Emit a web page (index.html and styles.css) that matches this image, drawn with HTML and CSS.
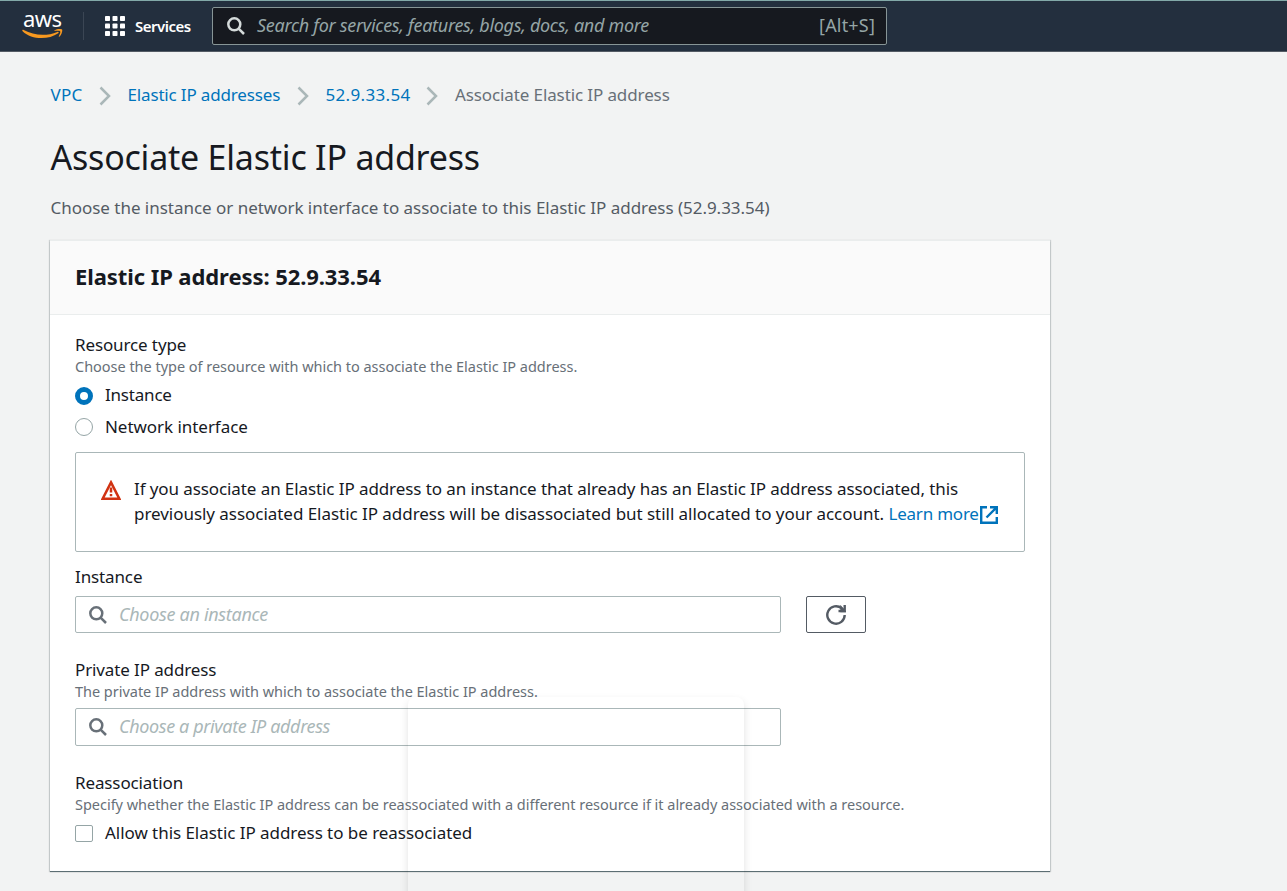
FILE: index.html
```html
<!DOCTYPE html>
<html lang="en">
<head>
<meta charset="utf-8">
<title>Associate Elastic IP address</title>
<link rel="stylesheet" href="styles.css">
</head>
<body>
<header class="topbar">
  <a class="logo">
    <span class="logo-word">aws</span>
    <svg class="logo-smile" width="41" height="10" viewBox="0 0 41 10"><path d="M.3 1.2C.6.7 1.100.7 1.700 1 12 6.700 25 7.200 35.300 2.900c1.200-.5 1.900.5.9 1.300C26.500 11 9.500 11 .6 2.200.2 1.800.1 1.500.3 1.200z"/><path d="M38.200 2.500c-.8-1-4.200-.6-5.600-.4-.6 0-.6-.4-.1-.7C35.300-.5 39.700 0 40.100.6c.5.600-.1 4.900-2.700 7.100-.4.300-.8.100-.6-.4.600-1.500 2-4 1.400-4.800z"/></svg>
  </a>
  <span class="divider"></span>
  <a class="services">
    <svg width="20" height="20" viewBox="0 0 20 20"><g><rect width="5" height="5" rx=".8"/><rect x="7.500" width="5" height="5" rx=".8"/><rect x="15" width="5" height="5" rx=".8"/><rect y="7.500" width="5" height="5" rx=".8"/><rect x="7.500" y="7.500" width="5" height="5" rx=".8"/><rect x="15" y="7.500" width="5" height="5" rx=".8"/><rect y="15" width="5" height="5" rx=".8"/><rect x="7.500" y="15" width="5" height="5" rx=".8"/><rect x="15" y="15" width="5" height="5" rx=".8"/></g></svg>
    <span>Services</span>
  </a>
  <div class="search">
    <svg class="glass" width="18" height="18" viewBox="0 0 18 18"><circle cx="7.300" cy="7.300" r="6"/><path d="M11.600 11.600 17 17"/></svg>
    <span class="search-hint">Search for services, features, blogs, docs, and more</span>
    <span class="search-key">[Alt+S]</span>
  </div>
</header>
<main class="page">
  <nav class="crumbs">
    <a class="crumb-vpc">VPC</a>
    <svg class="chevron" width="12" height="20" viewBox="0 0 12 20"><path d="M1.500 1.500 10 10l-8.500 8.500"/></svg>
    <a class="crumb-list">Elastic IP addresses</a>
    <svg class="chevron" width="12" height="20" viewBox="0 0 12 20"><path d="M1.500 1.500 10 10l-8.500 8.500"/></svg>
    <a class="crumb-ip">52.9.33.54</a>
    <svg class="chevron" width="12" height="20" viewBox="0 0 12 20"><path d="M1.500 1.500 10 10l-8.500 8.500"/></svg>
    <span class="crumb-current">Associate Elastic IP address</span>
  </nav>
  <h1>Associate Elastic IP address</h1>
  <p class="intro">Choose the instance or network interface to associate to this Elastic IP address (52.9.33.54)</p>

  <section class="card">
    <div class="card-head"><h2>Elastic IP address: 52.9.33.54</h2></div>
    <div class="card-body">
      <div class="field">
        <div class="label">Resource type</div>
        <div class="help">Choose the type of resource with which to associate the Elastic IP address.</div>
        <div class="choice choice-first"><span class="radio radio-on"></span><span class="choice-instance">Instance</span></div>
        <div class="choice choice-next"><span class="radio"></span><span class="choice-text">Network interface</span></div>
      </div>
      <div class="alert">
        <svg class="warn" width="20" height="20" viewBox="0 0 20 20"><path class="warn-edge" d="M10 2.400 18.300 18.700H1.700z"/><path class="warn-mark" d="M10 7.500v5M10 14v2.200"/></svg>
        <div class="alert-text">
          <div class="alert-one">If you associate an Elastic IP address to an instance that already has an Elastic IP address associated, this</div>
          <div class="alert-two"><span>previously associated Elastic IP address will be disassociated but still allocated to your account.</span><a class="learn">Learn more</a><svg class="external" width="18" height="18" viewBox="0 0 18 18"><path d="M7 1.200H1.200v15.600h15.600V11M10 1.200h6.800V8M16.500 1.500 6.500 11.500"/></svg></div>
        </div>
      </div>
      <div class="field field-instance">
        <div class="label">Instance</div>
        <div class="row">
          <div class="input"><svg class="glass" width="18" height="18" viewBox="0 0 18 18"><circle cx="7.300" cy="7.300" r="6"/><path d="M11.600 11.600 17 17"/></svg><span class="ph-instance">Choose an instance</span></div>
          <button class="refresh"><svg width="20" height="20" viewBox="0 0 20 20"><path d="M18.700 10a8.700 8.700 0 1 1-3-6.600l2 2"/><path d="M18.700 0v6H12.500"/><path d="M15.500 3v3h2.500z"/></svg></button>
        </div>
      </div>
      <div class="field field-private">
        <div class="label label-private">Private IP address</div>
        <div class="help">The private IP address with which to associate the Elastic IP address.</div>
        <div class="input input-private"><svg class="glass" width="18" height="18" viewBox="0 0 18 18"><circle cx="7.300" cy="7.300" r="6"/><path d="M11.600 11.600 17 17"/></svg><span class="ph-private">Choose a private IP address</span></div>
      </div>
      <div class="field field-reassoc">
        <div class="label">Reassociation</div>
        <div class="help">Specify whether the Elastic IP address can be reassociated with a different resource if it already associated with a resource.</div>
        <div class="choice choice-check"><span class="checkbox"></span><span class="choice-text">Allow this Elastic IP address to be reassociated</span></div>
      </div>
    </div>
  </section>
</main>
<div class="ghost"></div>
</body>
</html>
```
FILE: styles.css
```css
* { box-sizing: border-box; }

body {
  margin: 0;
  height: 891px;
  overflow: hidden;
  background: #f2f3f3;
  color: #16191f;
  font: 17px/25px "Noto Sans", sans-serif;
}

h1, h2, p { margin: 0; }
svg { display: block; flex: none; }
a { color: #0073bb; }

/* Top navigation */
.topbar {
  display: flex;
  align-items: center;
  height: 52px;
  background: #232f3e;
  border-top: 1px solid #82a9a8;
  border-bottom: 1px solid #545b64;
}
.logo { width: 41px; height: 28px; margin-left: 22px; margin-bottom: 2px; }
.logo-word {
  display: block;
  height: 18px;
  padding-left: 1px;
  color: #fff;
  font-size: 22px;
  font-weight: 400;
  line-height: 14px;
  letter-spacing: -.6px;
}
.logo-smile { fill: #f7981f; }
.divider { width: 1px; height: 28px; margin-left: 20px; background: #3b4654; }
.services {
  display: flex;
  align-items: center;
  gap: 10px;
  width: 107px;
  margin-left: 21px;
  color: #fff;
  font-size: 15px;
  font-weight: 600;
  letter-spacing: -.5px;
}
.services svg { fill: #fff; }
.search {
  display: flex;
  align-items: center;
  width: 675px;
  height: 38px;
  padding: 0 12px 0 14px;
  background: #16191f;
  border: 1px solid #879596;
  border-radius: 2px;
  color: #95a5a6;
}
.search .glass { stroke: #d5dbdb; }
.search-hint { margin: 0 0 2px 12px; font-size: 18px; font-style: italic; letter-spacing: -.295px; }
.search-key { margin: 0 -1px 2px auto; font-size: 18px; letter-spacing: .18px; }

.glass { fill: none; stroke: #687078; stroke-width: 2.500; }

/* Page heading */
.page { padding: 30px 0 0 50px; }
.crumbs { display: flex; align-items: center; height: 25px; color: #687078; }
.chevron { fill: none; stroke: #aab7b8; stroke-width: 2.500; position: relative; top: 1px; }
.crumb-vpc { width: 49px; padding-left: .5px; letter-spacing: .25px; }
.crumb-list { width: 170px; margin-left: 16px; padding-left: .5px; letter-spacing: -.16px; }
.crumb-ip { width: 101px; margin-left: 16px; padding-left: .5px; letter-spacing: .33px; }
.crumb-current { margin-left: 17px; letter-spacing: -.11px; }
h1 { margin-top: 30px; padding-left: .5px; font-size: 34px; font-weight: 400; line-height: 40px; letter-spacing: -.22px; }
.intro { margin-top: 18px; padding-left: .5px; color: #545b64; letter-spacing: -.025px; }

/* Form card */
.card {
  width: 1000px;
  height: 630px;
  margin-top: 21px;
  background: #fff;
  box-shadow: 0 -1px 0 #eaeded, 0 1px 1px rgba(0, 28, 36, .3), 0 0 1px 1px rgba(0, 28, 36, .15), 0 1px 0 rgba(0, 28, 36, .35);
}
.card-head { height: 74px; padding: 20px 25px 0; background: #fafafa; border-bottom: 1px solid #eaeded; }
h2 { font-size: 22px; font-weight: 700; line-height: 30px; letter-spacing: -.08px; }
.card-body { padding: 17px 25px 0; }
.label { letter-spacing: -.12px; }
.help { height: 20px; color: #687078; font-size: 14.500px; line-height: 18px; letter-spacing: -.026px; }
.choice { display: flex; align-items: center; gap: 12px; }
.choice-text { letter-spacing: -.045px; }
.choice-instance { letter-spacing: -.2px; }
.choice-first { margin-top: 5px; }
.choice-next { margin-top: 7px; }
.radio { width: 18px; height: 18px; background: #fff; border: 1px solid #95a5a6; border-radius: 50%; }
.radio-on { position: relative; top: 1px; border: 5px solid #0073bb; }
.checkbox { position: relative; top: 1px; width: 18px; height: 17px; border: 1px solid #95a5a6; border-radius: 2px; }

.alert {
  display: flex;
  gap: 13px;
  height: 100px;
  margin-top: 13px;
  padding: 23px 25px 0;
  border: 1px solid #aab7b8;
  border-radius: 2px;
}
.warn { margin-top: 4px; fill: none; stroke: #d13212; }
.warn-edge { stroke-width: 2.500; }
.warn-mark { stroke-width: 2.500; }
.alert-one { letter-spacing: -.092px; white-space: nowrap; }
.alert-two { display: flex; letter-spacing: -.042px; white-space: nowrap; }
.learn { margin-left: 4.500px; width: 91.500px; letter-spacing: -.22px; }
.external { margin-top: 5px; fill: none; stroke: #0073bb; stroke-width: 2.400; }

.field-instance { margin-top: 12px; }
.row { display: flex; gap: 25px; margin-top: 7px; }
.input {
  display: flex;
  align-items: center;
  gap: 12px;
  width: 706px;
  height: 37px;
  padding-left: 13px;
  border: 1px solid #aab7b8;
  border-radius: 2px;
  color: #aab7b8;
  font-size: 18px;
  font-style: italic;
}
.input span { margin-bottom: 1px; }
.ph-instance { letter-spacing: -.31px; }
.ph-private { letter-spacing: -.38px; }
.refresh {
  display: flex;
  align-items: center;
  justify-content: center;
  width: 60px;
  height: 37px;
  padding: 0;
  background: #fff;
  border: 1px solid #545b64;
  border-radius: 2px;
}
.refresh svg { fill: none; stroke: #545b64; stroke-width: 2.400; }
.field-private { margin-top: 24px; }
.input-private { height: 38px; margin-top: 6px; }
.field-reassoc { margin-top: 24px; }
.choice-check { margin-top: 5px; }

/* Empty floating layer, visible only by its shadow */
.ghost {
  position: absolute;
  top: 697px;
  left: 408px;
  width: 336px;
  height: 230px;
  border-radius: 8px;
  box-shadow: 0 4px 8px rgba(0, 0, 0, .12);
  pointer-events: none;
}
```
